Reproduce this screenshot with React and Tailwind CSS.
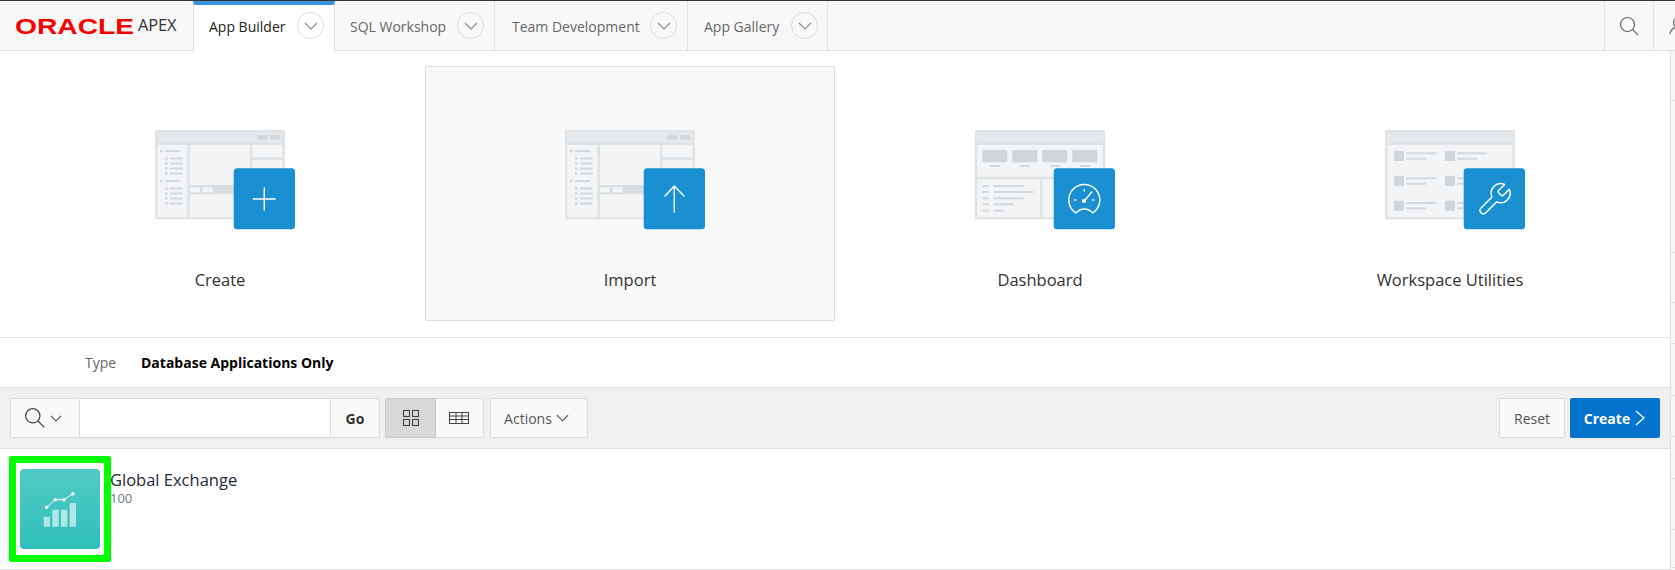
const sans = "font-['Open_Sans',sans-serif]";

const tabs = [
  { label: "App Builder", width: "w-[142px] pl-[15px] pr-[10px]", active: true },
  { label: "SQL Workshop", width: "w-[160px] pl-[15px] pr-[10px]" },
  { label: "Team Development", width: "w-[193px] pl-[17px] pr-[10px]" },
  { label: "App Gallery", width: "w-[140px] pl-[16px] pr-[9px]" },
];

const railRows = ["h-[50px]", "h-[152px]", "h-[50px]", "h-[41px]", "h-[52px]", "h-[41px]", "h-[42px]", "h-[51px]", "h-[38px]"];

function Chevron({ className = "stroke-[#8a8a8a]", w = 14, h = 8, sw = 1.2 }) {
  return (
    <svg width={w} height={h} viewBox="0 0 14 8" fill="none" className={className} strokeWidth={sw}>
      <path d="M1 1l6 6 6-6" />
    </svg>
  );
}

function Tab({ label, width, active }) {
  return (
    <div
      className={`flex items-center justify-between border-r border-[#e0e0e0] ${width} ${
        active ? "relative z-10 -mb-px border-l bg-white border-t-[4px] border-t-[#3b93e0] pb-[5px] text-[#222]" : "text-[#666]"
      }`}
    >
      <span className="pt-[2px] text-[14px] whitespace-nowrap">{label}</span>
      <span className={`flex h-[27px] w-[27px] items-center justify-center rounded-full border border-[#dcdcdc] ${active ? "bg-white" : "bg-[#f9f9f9]"}`}>
        <Chevron />
      </span>
    </div>
  );
}

function BlueBox({ children }) {
  return (
    <g>
      <rect x="88.7" y="38.3" width="61.3" height="61" rx="3.5" fill="#1a8fd1" />
      <g fill="none" stroke="#fff" strokeWidth="1.4" strokeLinecap="round" strokeLinejoin="round">
        {children}
      </g>
    </g>
  );
}

function Frame({ children }) {
  return (
    <g>
      <rect x="10" y="0" width="130" height="89.3" rx="1" fill="#dfe3e6" />
      <rect x="12" y="2" width="126" height="10.5" fill="#e6e9eb" />
      {children}
    </g>
  );
}

function PageWire() {
  const groups = [
    { head: 21, rows: [28.5, 33.5, 38.5, 43.5] },
    { head: 51, rows: [58.5, 63.5, 68.5, 73.5] },
  ];
  return (
    <Frame>
      <rect x="112.3" y="5" width="10" height="5" fill="#d3d8dc" />
      <rect x="125" y="5" width="10" height="5" fill="#d3d8dc" />
      <rect x="12.3" y="15" width="30" height="72.3" fill="#f3f4f6" />
      <rect x="45" y="15" width="60" height="40" fill="#f3f4f6" />
      <rect x="45" y="55" width="60" height="9.3" fill="#d9dde0" />
      <rect x="45" y="57.3" width="10" height="5" fill="#f3f4f6" />
      <rect x="57.7" y="57.3" width="10" height="5" fill="#f3f4f6" />
      <rect x="45" y="64.3" width="60" height="23" fill="#f3f4f6" />
      <rect x="107.3" y="15" width="30.4" height="12.3" fill="#f3f4f6" />
      <rect x="107.3" y="30" width="30.4" height="57.3" fill="#f3f4f6" />
      {groups.map((g) => (
        <g key={g.head} fill="#d3d8dc">
          <rect x="15" y={g.head - 1.3} width="2.6" height="2.6" />
          <rect x="20" y={g.head - 1} width="15" height="2" />
          {g.rows.map((y) => (
            <g key={y}>
              <rect x="20" y={y - 1.3} width="2.6" height="2.6" />
              <rect x="25" y={y - 1} width="12.7" height="2" />
            </g>
          ))}
        </g>
      ))}
    </Frame>
  );
}

function DashWire() {
  const cards = [17.3, 47.3, 77.3, 107.3];
  const rows = [
    [56, 58.7],
    [62, 68.7],
    [68.3, 58.7],
    [74.3, 48.7],
    [80.7, 38.7],
  ];
  return (
    <Frame>
      <rect x="12.3" y="15" width="125.4" height="31.7" fill="#f3f4f6" />
      <rect x="12.3" y="49.3" width="62.7" height="38" fill="#f3f4f6" />
      <rect x="77.3" y="49.3" width="60.4" height="38" fill="#f3f4f6" />
      {cards.map((x) => (
        <g key={x}>
          <rect x={x} y="20" width="25" height="12.3" fill="#cfd5da" />
          <rect x={x + 7.7} y="35" width="10" height="2" fill="#d3d8dc" />
        </g>
      ))}
      {rows.map(([y, end]) => (
        <g key={y} fill="#d3d8dc">
          <rect x="17.3" y={y - 1} width="6.7" height="2" />
          <rect x="28.7" y={y - 1} width={end - 28.7} height="2" />
        </g>
      ))}
    </Frame>
  );
}

function UtilWire() {
  const rows = [21, 46, 70.7];
  const cols = [19, 70];
  return (
    <Frame>
      <rect x="12.3" y="15" width="125.4" height="72.3" fill="#f3f4f6" />
      {rows.map((y) =>
        cols.map((x) => (
          <g key={`${x}-${y}`}>
            <rect x={x} y={y} width="10" height="10" fill="#cfd5da" />
            <rect x={x + 12.3} y={y + 1.3} width="30" height="2" fill="#d3d8dc" />
            <rect x={x + 12.3} y={y + 6.7} width="20" height="2" fill="#d3d8dc" />
          </g>
        ))
      )}
    </Frame>
  );
}

function Tile({ label, selected, wire, children }) {
  return (
    <div
      className={`flex h-[255px] flex-col items-center rounded-[2px] border pt-[63px] ${
        selected ? "border-[#dcdcdc] bg-[#f9f9f9]" : "border-transparent"
      }`}
    >
      <svg width="150" height="100" viewBox="0 0 150 100">
        {wire}
        <BlueBox>{children}</BlueBox>
      </svg>
      <div className="mt-[38px] text-[16.5px] leading-[24px] text-[#333]">{label}</div>
    </div>
  );
}

function AppIcon() {
  return (
    <div className="h-[80px] w-[80px] rounded-[4px] bg-gradient-to-b from-[#50cac4] to-[#2ebfbc]">
      <svg width="80" height="80" viewBox="0 0 80 80">
        <g fill="#fff" fillOpacity="0.6">
          <rect x="23.7" y="47.7" width="6.3" height="10" />
          <rect x="32.3" y="40.7" width="6.4" height="17" />
          <rect x="41" y="40.7" width="6.3" height="17" />
          <rect x="49.7" y="34" width="6.3" height="23.7" />
        </g>
        <polyline points="26.7,38.3 35.3,30.7 44,30.7 53,24.7" fill="none" stroke="#fff" strokeWidth="1" />
        <g fill="#fff">
          <circle cx="26.7" cy="38.3" r="1.7" />
          <circle cx="35.3" cy="30.7" r="1.7" />
          <circle cx="44" cy="30.7" r="1.7" />
          <circle cx="53" cy="24.7" r="1.7" />
        </g>
      </svg>
    </div>
  );
}

export default function App() {
  return (
    <div className={`h-[570px] w-[1675px] overflow-hidden bg-white ${sans}`}>
      <header className="flex h-[51px] border-t border-b border-t-[#333] border-b-[#e0e0e0] bg-[#f8f8f8]">
        <div className="flex w-[193px] items-center pl-[15px]">
          <svg width="120" height="24" viewBox="0 0 120 24">
            <text
              x="0"
              y="20"
              textLength="119"
              lengthAdjust="spacingAndGlyphs"
              fontFamily="'Liberation Sans', sans-serif"
              fontWeight="700"
              fontSize="22"
              fill="#f80000"
            >
              ORACLE
            </text>
          </svg>
          <span className="ml-[3px] text-[16.5px] tracking-[-0.2px] text-[#333]">APEX</span>
        </div>
        {tabs.map((t) => (
          <Tab key={t.label} {...t} />
        ))}
        <div className="flex-1" />
        <div className="flex w-[50px] items-center justify-center border-x border-[#e0e0e0]">
          <svg width="20" height="20" viewBox="0 0 20 20" fill="none" stroke="#666" strokeWidth="1.2">
            <circle cx="8.5" cy="8.5" r="7" />
            <path d="M13.5 13.5l5.5 5.5" />
          </svg>
        </div>
        <div className="w-[21px] overflow-hidden pl-[15px] pt-[15px]">
          <svg width="20" height="20" viewBox="0 0 20 20" fill="none" stroke="#666" strokeWidth="1.2">
            <circle cx="10" cy="6.5" r="5.5" />
            <path d="M1 18c0-4 4-6 6-7M19 18c0-4-4-6-6-7" />
          </svg>
        </div>
      </header>

      <div className="flex">
        <main className="w-[1670px]">
          <section className="h-[287px] border-b border-[#e0e0e0] pl-[15px] pt-[15px]">
            <div className="grid w-[1640px] grid-cols-4">
              <Tile label="Create" wire={<PageWire />}>
                <path d="M119.3 58v22M108.3 69h22" />
              </Tile>
              <Tile label="Import" selected wire={<PageWire />}>
                <path d="M119.3 56v26M110 66l9.3-10 9.7 10" />
              </Tile>
              <Tile label="Dashboard" wire={<DashWire />}>
                <path d="M110.9 83A15.5 15.5 0 1 1 127.7 83Q124 79 119.3 79T110.9 83Z" />
                <path d="M119.3 71l7.5-9M119.3 59.5v1.5M109.5 70h1.5M127.5 70h1.5" />
                <circle cx="119" cy="71" r="1.4" fill="#fff" />
              </Tile>
              <Tile label="Workspace Utilities" wire={<UtilWire />}>
                <svg x="100.3" y="50.5" width="38" height="38" viewBox="0 0 24 24" strokeWidth="0.9">
                  <path d="M14.7 6.3a1 1 0 0 0 0 1.4l1.6 1.6a1 1 0 0 0 1.4 0l3.77-3.77a6 6 0 0 1-7.94 7.94l-6.91 6.91a2.12 2.12 0 0 1-3-3l6.91-6.91a6 6 0 0 1 7.94-7.94l-3.76 3.76z" />
                </svg>
              </Tile>
            </div>
          </section>

          <section className="flex h-[50px] items-center border-b border-[#e0e0e0] pl-[85px] text-[14px]">
            <span className="w-[56px] text-[#666]">Type</span>
            <span className="font-bold text-black">Database Applications Only</span>
          </section>

          <section className="flex h-[61px] items-center border-b border-[#e0e0e0] bg-[#f0f0f0] pl-[10px] pr-[10px]">
            <div className="flex h-[40px] items-stretch">
              <div className="flex w-[70px] items-center justify-center gap-[4px] rounded-l-[2px] border border-[#dadada] bg-[#f9f9f9] pr-[4px]">
                <svg width="22" height="22" viewBox="0 0 20 20" fill="none" stroke="#444" strokeWidth="1.1">
                  <circle cx="8" cy="8" r="6.5" />
                  <path d="M12.7 12.7l5.8 5.8" />
                </svg>
                <Chevron className="stroke-[#444]" w={12} h={7} />
              </div>
              <div className="w-[250px] border-y border-[#dadada] bg-white" />
              <div className="flex w-[50px] items-center justify-center rounded-r-[2px] border border-[#dadada] bg-[#f9f9f9] text-[14px] font-bold text-[#333]">
                Go
              </div>
            </div>
            <div className="ml-[5px] flex h-[40px] items-stretch">
              <div className="flex w-[51px] items-center justify-center rounded-l-[2px] border border-[#c8c8c8] bg-[#d9d9d9]">
                <svg width="18" height="18" viewBox="0 0 18 18" fill="none" stroke="#444" strokeWidth="1.1">
                  <rect x="1.5" y="1.5" width="6" height="6" />
                  <rect x="10.5" y="1.5" width="6" height="6" />
                  <rect x="1.5" y="10.5" width="6" height="6" />
                  <rect x="10.5" y="10.5" width="6" height="6" />
                </svg>
              </div>
              <div className="flex w-[48px] items-center justify-center rounded-r-[2px] border border-l-0 border-[#dadada] bg-[#f9f9f9] pr-[2px]">
                <svg width="20" height="14" viewBox="0 0 20 14" fill="none" stroke="#444" strokeWidth="1">
                  <rect x="0.5" y="1.5" width="19" height="11" />
                  <path d="M0.5 5h19M0.5 8.5h19M7 1.5v11M13 1.5v11" />
                </svg>
              </div>
            </div>
            <div className="ml-[6px] flex h-[40px] w-[98px] items-center justify-center gap-[4px] rounded-[2px] border border-[#dadada] bg-[#f9f9f9] pr-[5px] text-[14px] text-[#555]">
              Actions
              <Chevron className="stroke-[#444]" w={13} h={8} />
            </div>
            <div className="ml-auto flex h-[40px] w-[66px] items-center justify-center rounded-[2px] border border-[#dadada] bg-[#f9f9f9] text-[14px] text-[#555]">
              Reset
            </div>
            <div className="ml-[5px] flex h-[40px] w-[90px] items-center justify-center gap-[5px] rounded-[2px] bg-[#0572ce] text-[14px] font-bold text-white">
              Create
              <svg width="11" height="16" viewBox="0 0 11 16" fill="none" stroke="#fff" strokeWidth="1.3">
                <path d="M1 1l8 7-8 7" />
              </svg>
            </div>
          </section>

          <section className="flex h-[121px] items-start border-b border-[#e0e0e0] pl-[9px] pt-[7px]">
            <div className="h-[106px] w-[102px] rounded-[2px] border-[7px] border-[#00ff00] pl-[4px] pt-[6px]">
              <AppIcon />
            </div>
            <div className="-ml-px pt-[12px]">
              <div className="text-[16.5px] leading-[24px] text-[#1f2a3a]">Global Exchange</div>
              <div className="-mt-[3px] text-[13px] leading-[18px] text-[#707a8a]">100</div>
            </div>
          </section>
        </main>

        <aside className="w-[5px] border-l border-[#e0e0e0] bg-[#f5f5f5]">
          {railRows.map((h, i) => (
            <div key={i} className={`${h} border-b border-[#e0e0e0]`} />
          ))}
        </aside>
      </div>
    </div>
  );
}
